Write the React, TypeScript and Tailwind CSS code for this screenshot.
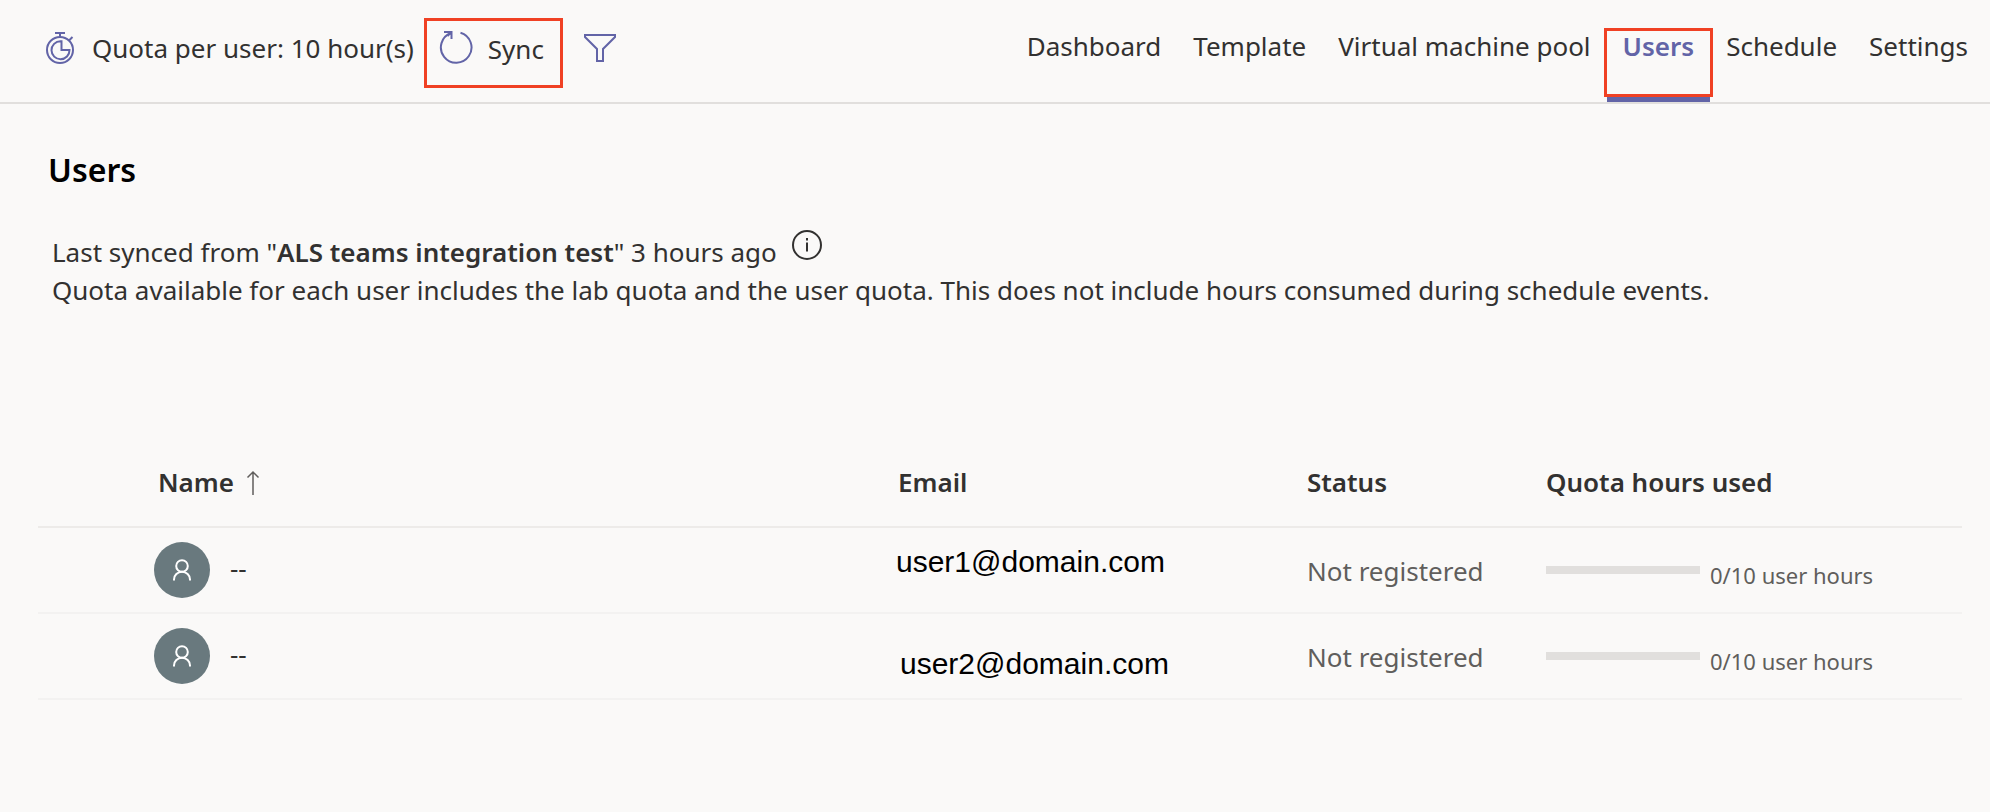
import React from "react";

type User = { email: string; emailPlacement: string; used: number; quota: number };

const users: User[] = [
  { email: "user1@domain.com", emailPlacement: "pt-[15px] -ml-0.5", used: 0, quota: 10 },
  { email: "user2@domain.com", emailPlacement: "pt-[31px] ml-0.5", used: 0, quota: 10 },
];

const tabs = ["Dashboard", "Template", "Virtual machine pool", "Users", "Schedule", "Settings"];

function StopwatchIcon() {
  return (
    <svg width="28" height="32" viewBox="0 0 28 32" fill="none" stroke="#6264a7" strokeWidth="2" aria-hidden="true">
      <circle cx="14" cy="18" r="13" />
      <path d="M9 1h10M14 1v4M23 8.500l3.500-3.500" />
      <path d="M14.500 9.200a9 9 0 1 0 9 8.800h-8v-8.800z" />
    </svg>
  );
}

function SyncIcon() {
  return (
    <svg width="34" height="34" viewBox="0 0 34 34" fill="none" stroke="#6264a7" strokeWidth="2" aria-hidden="true">
      <path d="M21.500 2.700A15.300 15.300 0 1 1 12 3" />
      <path d="M5 2h7.500v7M12.500 2l-4 4" />
    </svg>
  );
}

function FilterIcon() {
  return (
    <svg width="34" height="30" viewBox="0 0 34 30" fill="none" stroke="#6264a7" strokeWidth="2" aria-hidden="true">
      <path d="M2 2h30v2L20 16v12h-6V16L2 4z" />
    </svg>
  );
}

function InfoIcon() {
  return (
    <svg width="32" height="32" viewBox="0 0 32 32" fill="none" stroke="#323130" strokeWidth="2" aria-hidden="true">
      <circle cx="16" cy="16" r="14" />
      <path d="M16 13.500v9M16 9v2.500" />
    </svg>
  );
}

function PersonIcon() {
  return (
    <svg width="20" height="24" viewBox="0 0 20 24" fill="none" stroke="#fff" strokeWidth="2" aria-hidden="true">
      <circle cx="10" cy="8" r="5.800" />
      <path d="M2 22.500v-1a8 7.700 0 0 1 16 0v1" />
    </svg>
  );
}

export default function App() {
  return (
    <div className="min-h-screen bg-[#faf9f8] font-['Noto_Sans','Open_Sans',sans-serif] text-[26px] leading-[38px] text-[#323130]">
      <header className="flex h-[104px] items-start justify-between border-b-2 border-[#e1dfdd] pl-[46px] pr-1.5">
        <div className="flex items-start pt-[18px]">
          <button type="button" className="flex items-center gap-[18px] whitespace-nowrap pt-[11px]">
            <StopwatchIcon />
            Quota per user: 10 hour(s)
          </button>
          <button
            type="button"
            className="ml-2.5 flex h-[70px] w-[139px] items-start gap-[15px] border-3 border-[#f04124] pl-3 pt-[9px]"
          >
            <SyncIcon />
            Sync
          </button>
          <button type="button" aria-label="Filter" className="ml-5 pt-[15px]">
            <FilterIcon />
          </button>
        </div>
        <nav className="flex h-[102px] whitespace-nowrap">
          {tabs.map((tab) =>
            tab === "Users" ? (
              <a
                key={tab}
                href="#users"
                aria-current="page"
                className="relative border-b-8 border-[#6264a7] px-4 pt-[27px] font-semibold text-[#6264a7]"
              >
                {tab}
                <span className="absolute -left-[3px] -right-[3px] top-7 h-[69px] border-3 border-[#f04124]" />
              </a>
            ) : (
              <a key={tab} href={"#" + tab.toLowerCase().replace(/ /g, "-")} className="px-4 pt-[27px]">
                {tab}
              </a>
            )
          )}
        </nav>
      </header>

      <main className="pl-[38px] pr-7">
        <h1 className="pl-2.5 pt-11 text-[32px] font-semibold leading-[44px] text-black">Users</h1>

        <section className="pl-3.5 pt-[41px]">
          <p className="flex">
            <span>
              Last synced from "<strong className="font-semibold">ALS teams integration test</strong>" 3 hours ago
            </span>
            <button type="button" aria-label="Sync details" className="-mt-1 ml-3.5 h-8">
              <InfoIcon />
            </button>
          </p>
          <p>
            Quota available for each user includes the lab quota and the user quota. This does not include hours
            consumed during schedule events.
          </p>
        </section>

        <table className="mt-[132px] w-full table-fixed border-collapse text-left">
          <colgroup>
            <col />
            <col className="w-[409px]" />
            <col className="w-[239px]" />
            <col className="w-[416px]" />
          </colgroup>
          <thead>
            <tr className="h-[86px] border-b-2 border-[#edebe9] align-top">
              <th className="pl-[120px] pt-[22px] font-semibold">
                <button type="button" className="flex items-center gap-3">
                  Name
                  <svg width="14" height="26" viewBox="0 0 14 26" fill="none" stroke="#605e5c" strokeWidth="1.500" aria-hidden="true">
                    <path d="M7 26V3M1.500 8.500L7 3l5.500 5.500" />
                  </svg>
                </button>
              </th>
              <th className="pt-[22px] font-semibold">Email</th>
              <th className="pt-[22px] font-semibold">Status</th>
              <th className="pt-[22px] font-semibold">Quota hours used</th>
            </tr>
          </thead>
          <tbody>
            {users.map((user) => (
              <tr key={user.email} className="h-[86px] border-b-2 border-[#f3f2f1] align-top">
                <td className="pl-[116px] pt-3.5">
                  <div className="flex items-center gap-5">
                    <span className="flex size-14 items-center justify-center rounded-full bg-[#69797e]">
                      <PersonIcon />
                    </span>
                    <span className="pb-1">--</span>
                  </div>
                </td>
                <td className="font-['Liberation_Sans',Arial,sans-serif] text-[30px] text-black">
                  <div className={user.emailPlacement}>{user.email}</div>
                </td>
                <td className="pt-6 text-[#605e5c]">Not registered</td>
                <td className="pt-7 text-[22px] text-[#605e5c]">
                  <div className="flex items-start gap-2.5">
                    <div
                      role="progressbar"
                      aria-label="Quota hours used"
                      aria-valuenow={user.used}
                      aria-valuemax={user.quota}
                      className="mt-2.5 h-2 w-[154px] bg-[#e1dfdd]"
                    />
                    <span>
                      {user.used}/{user.quota} user hours
                    </span>
                  </div>
                </td>
              </tr>
            ))}
          </tbody>
        </table>
      </main>
    </div>
  );
}
